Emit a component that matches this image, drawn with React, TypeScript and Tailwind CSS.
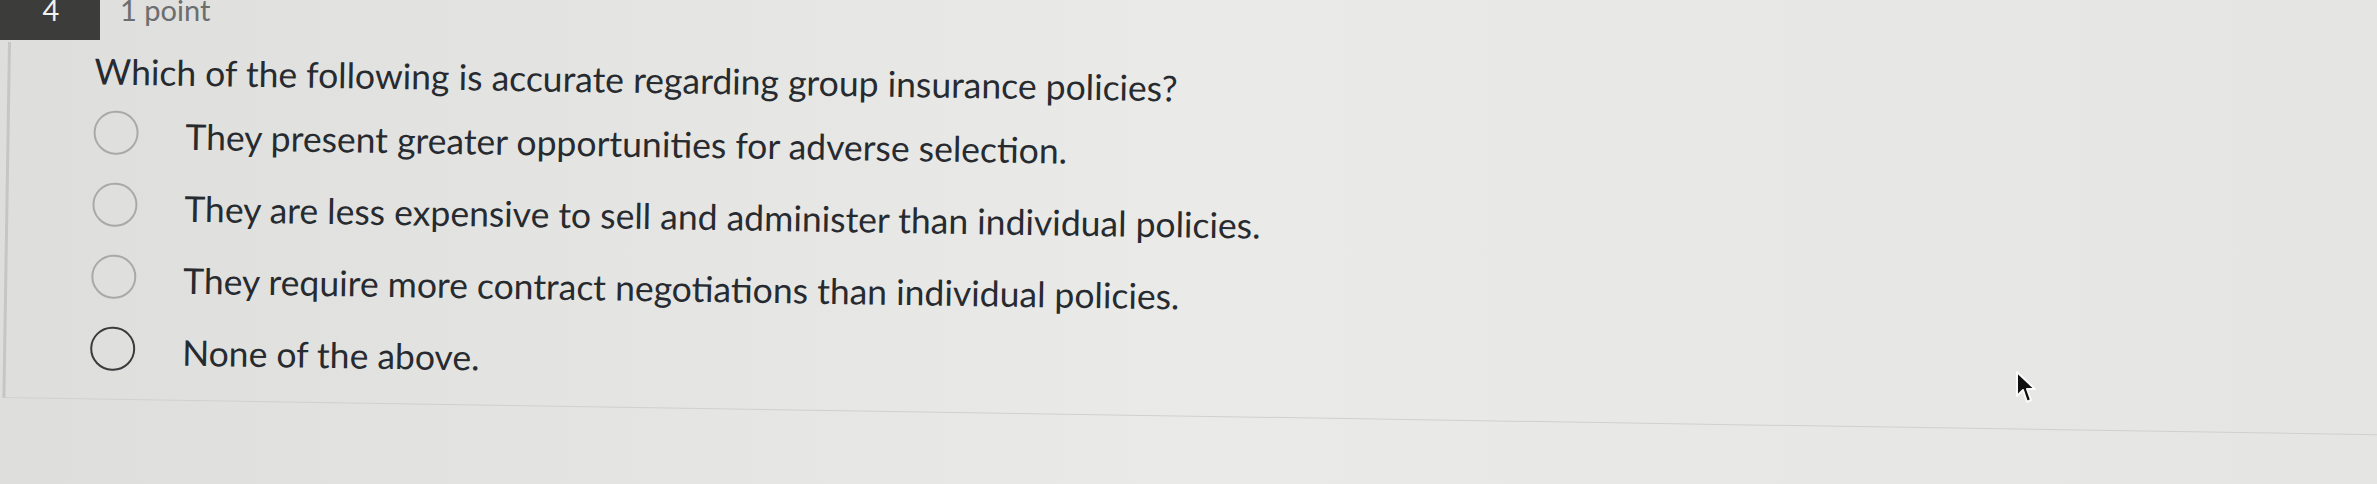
import React from 'react';

const options = [
  { label: 'They present greater opportunities for adverse selection.', dim: true },
  { label: 'They are less expensive to sell and administer than individual policies.', dim: true },
  { label: 'They require more contract negotiations than individual policies.', dim: true },
  { label: 'None of the above.', dim: false },
];

const Radio: React.FC<{ dim: boolean }> = ({ dim }) => (
  <div
    className={`w-[45px] h-[44px] rounded-full border-[2px] shrink-0 ${
      dim ? 'border-[#a9a9a7]' : 'border-[#3a3b3d]'
    }`}
  />
);

const Cursor: React.FC = () => (
  <svg className="absolute left-[2014px] top-[369px]" width="24" height="38" viewBox="0 0 24 38">
    <path
      d="M3 3 L3 27 L9 21 L13 33 L17 31 L13 20 L21 20 Z"
      fill="#111"
      stroke="#fafafa"
      strokeWidth="2"
      strokeLinejoin="round"
    />
  </svg>
);

export default function App() {
  return (
    <div
      className="relative w-[2377px] h-[484px] overflow-hidden bg-gradient-to-r from-[#dededc] via-[#eaeae8] to-[#e5e5e3] text-[#272b30]"
      style={{ fontFamily: 'Lato, "Open Sans", sans-serif' }}
    >
      <div className="flex items-start h-[40px]">
        <div className="w-[100px] h-[40px] bg-[#3c3c3b] flex justify-center pl-[2px]">
          <span className="text-[29px] leading-[20px] text-[#f2f2f2]">4</span>
        </div>
        <span className="ml-[20px] text-[29px] leading-[20px] text-[#6c6d6e]">1 point</span>
      </div>

      {/* photo is tilted slightly clockwise */}
      <div className="ml-[8px] mt-[2px] w-[2400px] h-[356px] border-l-[3px] border-[#c6c6c4] border-b border-b-[#d0d0ce] origin-top-left rotate-[0.9deg]">
        <div className="pl-[84px] pt-[8px]">
          <p className="text-[35.5px] leading-[40px]">
            Which of the following is accurate regarding group insurance policies?
          </p>
          <div className="mt-[5px] flex flex-col">
            {options.map((o) => (
              <div key={o.label} className="h-[72px] flex items-center">
                <Radio dim={o.dim} />
                <span className="ml-[47px] pt-[5px] text-[35.5px] leading-[40px]">{o.label}</span>
              </div>
            ))}
          </div>
        </div>
      </div>

      <Cursor />
    </div>
  );
}
